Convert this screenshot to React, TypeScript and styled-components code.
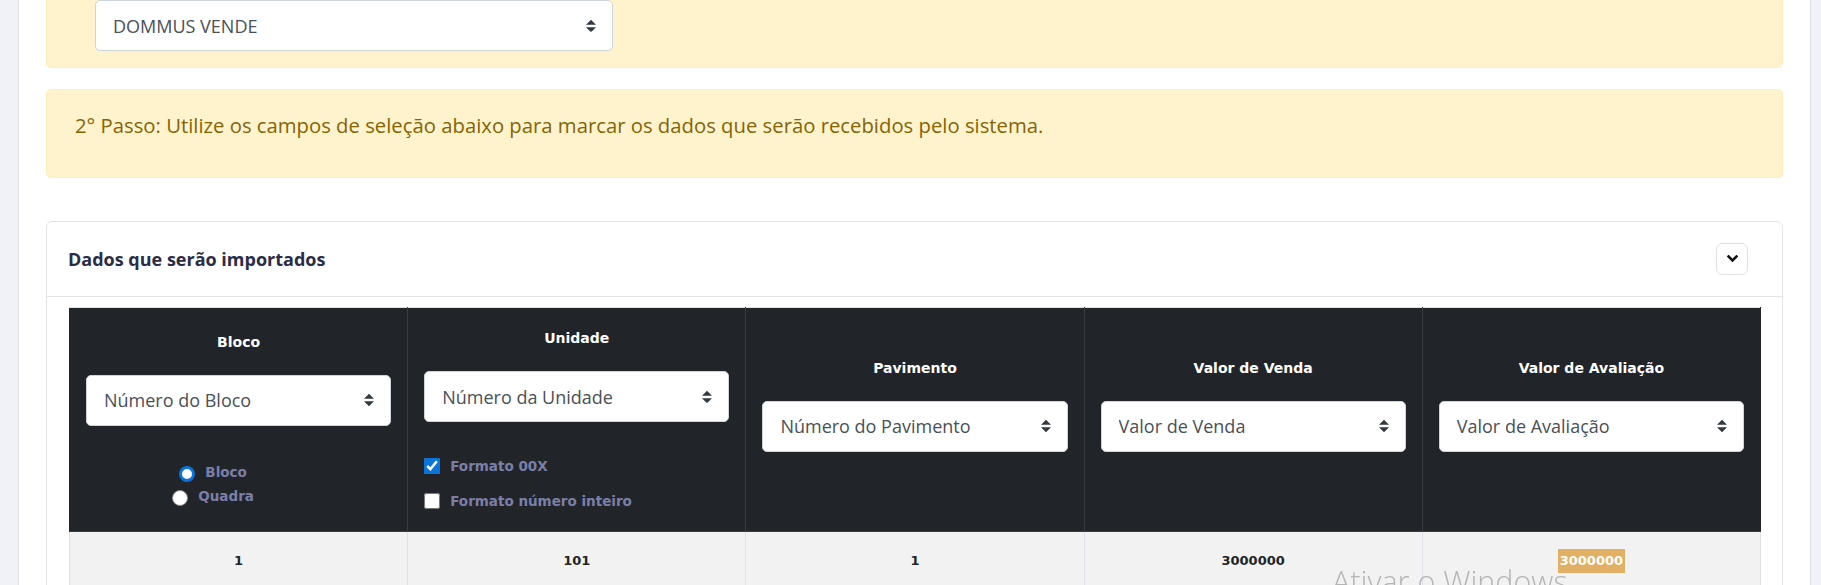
import React from "react";
import styled, { createGlobalStyle } from "styled-components";

const GlobalStyle = createGlobalStyle`
  html, body {
    margin: 0;
    padding: 0;
    height: 585px;
    overflow: hidden;
    background: #f1f2f7;
  }
  body {
    font-family: "Open Sans", "Noto Sans", sans-serif;
  }
  *, *::before, *::after { box-sizing: border-box; }
`;

const Panel = styled.main`
  margin-left: 18px;
  margin-top: -14px;
  width: 1793px;
  min-height: 800px;
  background: #fff;
  border-left: 1px solid #dcdde2;
  border-right: 1px solid #dcdde2;
  padding: 0 27px;
`;

const Alert = styled.div`
  background: #fff3cd;
  border: 1px solid #ffeeba;
  border-radius: 5px;
  color: #856404;
`;

const SourceAlert = styled(Alert)`
  padding: 13px 0 16px 48px;
`;

const StepAlert = styled(Alert)`
  margin-top: 21px;
  padding: 20px 28px;
`;

const StepText = styled.p`
  margin: 0 0 17px;
  font-size: 20.3px;
  line-height: 30px;
`;

const Card = styled.section`
  margin-top: 43px;
  border: 1px solid #e3e4e8;
  border-radius: 6px;
  background: #fff;
`;

const CardHeader = styled.header`
  display: flex;
  align-items: center;
  justify-content: space-between;
  padding: 21px 34px 21px 21px;
  border-bottom: 1px solid #e3e4e8;
`;

const CardTitle = styled.h5`
  margin: 0;
  font-size: 18px;
  font-weight: 700;
  color: #2b2c46;
  line-height: 24px;
`;

const CollapseButton = styled.button`
  width: 32px;
  height: 32px;
  display: flex;
  align-items: center;
  justify-content: center;
  padding: 0;
  background: #fff;
  border: 1px solid #dee2e6;
  border-radius: 6px;
`;

const CardBody = styled.div`
  padding: 10px 21px 0 22px;
`;

const Table = styled.table`
  width: 100%;
  border-collapse: collapse;
  table-layout: fixed;
`;

const HeadCell = styled.th`
  background: #212529;
  border: 1px solid #383c41;
  border-top-color: #dee2e6;
  padding: 20px 16px;
  vertical-align: middle;
  text-align: center;
  font-weight: normal;
  &:first-child { border-left-color: #212529; }
  &:last-child { border-right-color: #212529; }
`;

const HeadTitle = styled.div`
  font-family: "DejaVu Sans", Verdana, sans-serif;
  font-weight: 700;
  font-size: 14px;
  line-height: 20px;
  color: #fff;
  margin-bottom: 23px;
`;

const Spacer = styled.div`
  height: 30px;
`;

const SelectWrap = styled.div<{ $width?: number }>`
  position: relative;
  width: ${(p) => (p.$width ? `${p.$width}px` : "100%")};
`;

const NativeSelect = styled.select<{ $upper?: boolean }>`
  appearance: none;
  -webkit-appearance: none;
  display: block;
  width: 100%;
  height: 51px;
  margin: 0;
  padding: 0 40px 0 17px;
  background: #fff;
  border: 1px solid #ced4da;
  border-radius: 5px;
  color: #495057;
  font-family: "Open Sans", "Noto Sans", sans-serif;
  font-size: 18px;
  text-transform: ${(p) => (p.$upper ? "uppercase" : "none")};
  outline: none;
`;

const Caret = styled.svg`
  position: absolute;
  right: 17px;
  top: 50%;
  transform: translateY(-50%);
  pointer-events: none;
`;

const RadioGroup = styled.div`
  margin-top: 34px;
  padding-right: 51px;
  display: flex;
  flex-direction: column;
  align-items: center;
`;

const OptionLabel = styled.label<{ $lineHeight: number }>`
  display: inline-flex;
  align-items: center;
  gap: 10px;
  height: ${(p) => p.$lineHeight}px;
  font-family: "DejaVu Sans", Verdana, sans-serif;
  font-weight: 700;
  font-size: 13.5px;
  color: #7b7fa8;
  white-space: nowrap;
`;

const Radio = styled.input.attrs({ type: "radio" })`
  appearance: none;
  -webkit-appearance: none;
  width: 16px;
  height: 16px;
  margin: 4px 0 0;
  border-radius: 50%;
  background: #fff;
  border: 1px solid #8a8a8a;
  &:checked {
    border: 3px solid #0a74da;
  }
`;

const CheckGroup = styled.div`
  margin-top: 34px;
  display: flex;
  flex-direction: column;
  align-items: flex-start;
  gap: 15px;
`;

const Checkbox = styled.input.attrs({ type: "checkbox" })`
  width: 16px;
  height: 16px;
  margin: 0;
  accent-color: #0a74da;
`;

const BodyCell = styled.td`
  background: #f2f2f2;
  border: 1px solid #dee2e6;
  padding: 17px 16px;
  text-align: center;
  font-family: "DejaVu Sans", Verdana, sans-serif;
  font-weight: 700;
  font-size: 13px;
  line-height: 20px;
  color: #212529;
`;

const Highlight = styled.mark`
  display: inline-block;
  background: #e1b064;
  color: #fff;
  padding: 2px 1.5px;
`;

const Watermark = styled.div`
  position: fixed;
  left: 1332px;
  top: 566px;
  font-family: "Open Sans", sans-serif;
  font-size: 30.5px;
  font-weight: 300;
  line-height: 1;
  color: rgba(160, 160, 160, 0.75);
  pointer-events: none;
  white-space: nowrap;
`;

const UpDown = () => (
  <Caret width="10" height="12.5" viewBox="0 0 4 5" aria-hidden="true">
    <path fill="#343a40" d="M2 0L0 2h4zm0 5L0 3h4z" />
  </Caret>
);

type SelectProps = { value: string; width?: number; upper?: boolean };

const Select = ({ value, width, upper }: SelectProps) => (
  <SelectWrap $width={width}>
    <NativeSelect $upper={upper} defaultValue={value}>
      <option value={value}>{value}</option>
    </NativeSelect>
    <UpDown />
  </SelectWrap>
);

const simpleColumns = [
  { title: "Pavimento", select: "Número do Pavimento" },
  { title: "Valor de Venda", select: "Valor de Venda" },
  { title: "Valor de Avaliação", select: "Valor de Avaliação" },
];

export default function App() {
  return (
    <>
      <GlobalStyle />
      <Panel>
        <SourceAlert>
          <Select value="DOMMUS VENDE" width={518} upper />
        </SourceAlert>

        <StepAlert>
          <StepText>
            2° Passo: Utilize os campos de seleção abaixo para marcar os dados que serão recebidos pelo sistema.
          </StepText>
        </StepAlert>

        <Card>
          <CardHeader>
            <CardTitle>Dados que serão importados</CardTitle>
            <CollapseButton type="button" aria-label="Recolher">
              <svg width="11" height="8" viewBox="0 0 11 8" aria-hidden="true">
                <polyline
                  points="1.5,1.5 5.5,5.5 9.5,1.5"
                  fill="none"
                  stroke="#111"
                  strokeWidth="2.6"
                  strokeLinecap="square"
                />
              </svg>
            </CollapseButton>
          </CardHeader>
          <CardBody>
            <Table>
              <thead>
                <tr>
                  <HeadCell>
                    <HeadTitle>Bloco</HeadTitle>
                    <Select value="Número do Bloco" />
                    <RadioGroup>
                      <OptionLabel $lineHeight={24}>
                        <Radio name="tipo" defaultChecked />
                        Bloco
                      </OptionLabel>
                      <OptionLabel $lineHeight={24}>
                        <Radio name="tipo" />
                        Quadra
                      </OptionLabel>
                    </RadioGroup>
                  </HeadCell>
                  <HeadCell>
                    <HeadTitle>Unidade</HeadTitle>
                    <Select value="Número da Unidade" />
                    <CheckGroup>
                      <OptionLabel $lineHeight={20}>
                        <Checkbox defaultChecked />
                        Formato 00X
                      </OptionLabel>
                      <OptionLabel $lineHeight={20}>
                        <Checkbox />
                        Formato número inteiro
                      </OptionLabel>
                    </CheckGroup>
                  </HeadCell>
                  {simpleColumns.map((c) => (
                    <HeadCell key={c.title}>
                      <HeadTitle>{c.title}</HeadTitle>
                      <Select value={c.select} />
                      <Spacer />
                    </HeadCell>
                  ))}
                </tr>
              </thead>
              <tbody>
                <tr>
                  <BodyCell>1</BodyCell>
                  <BodyCell>101</BodyCell>
                  <BodyCell>1</BodyCell>
                  <BodyCell>3000000</BodyCell>
                  <BodyCell>
                    <Highlight>3000000</Highlight>
                  </BodyCell>
                </tr>
              </tbody>
            </Table>
          </CardBody>
        </Card>
      </Panel>
      <Watermark>Ativar o Windows</Watermark>
    </>
  );
}
